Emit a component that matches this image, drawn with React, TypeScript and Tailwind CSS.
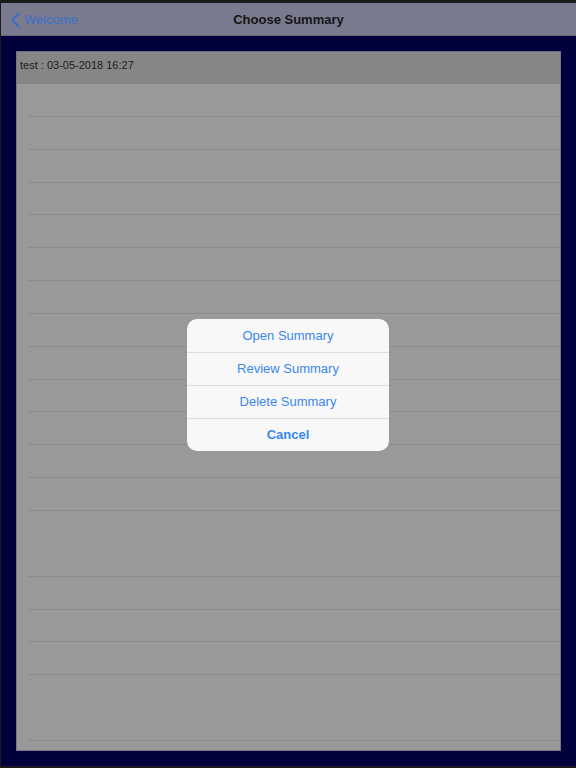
import React from "react"

const rowCount = 20
// rows whose bottom separator is not drawn in the reference
const noLine = new Set([13, 18])

function Alert() {
  const actions = ["Open Summary", "Review Summary", "Delete Summary"]
  return (
    <div className="absolute left-[187px] top-[319px] w-[202px] rounded-[10px] bg-[#f8f8f8] overflow-hidden">
      {actions.map((a, i) => (
        <div
          key={a}
          className={
            "h-[33px] flex items-center justify-center text-[13px] text-[#3a87f2] " +
            (i > 0 ? "border-t border-[#dedede]" : "")
          }
        >
          {a}
        </div>
      ))}
      <div className="h-[33px] flex items-center justify-center text-[13px] font-bold text-[#3a87f2] border-t border-[#dedede]">
        Cancel
      </div>
    </div>
  )
}

export default function App() {
  return (
    <div
      className="relative w-[576px] h-[768px] bg-[#1b1b1b] pt-[3px] pl-[1px] pb-[2px] flex flex-col overflow-hidden"
      style={{ fontFamily: '"Liberation Sans", Arial, sans-serif' }}
    >
      <div className="relative h-[33px] shrink-0 bg-[#7a7a8e] border-b border-[#67677a] flex items-center pt-[2px]">
        <div className="flex items-center pl-[9px] text-[13px] text-[#3a6fc8]">
          <svg width="11" height="16" viewBox="0 0 11 16" fill="none" className="mr-[3px]">
            <path d="M8.5 1.5 L2.5 8 L8.5 14.5" stroke="#3a6fc8" strokeWidth="2" strokeLinecap="round" strokeLinejoin="round" />
          </svg>
          <span>Welcome</span>
        </div>
        <div className="absolute inset-0 pt-[2px] flex items-center justify-center text-[13px] font-bold text-[#151515]">
          Choose Summary
        </div>
      </div>
      <div className="flex-1 bg-[#02003c] p-[15px] flex">
        <div className="flex-1 bg-[#999999] border border-[#75758a] border-t-[#6a6a80] flex flex-col overflow-hidden">
          <div className="h-[32px] shrink-0 bg-[#868686] pl-[3px] pt-[5px] text-[11px] text-[#1c1c1c]">
            test : 03-05-2018 16:27
          </div>
          {Array.from({ length: rowCount }).map((_, i) => (
            <div key={i} className="h-[32.85px] shrink-0 pl-[11px]">
              <div
                className={
                  "h-full " + (noLine.has(i) ? "" : "border-b border-[#8b8b8b]")
                }
              />
            </div>
          ))}
        </div>
      </div>
      <Alert />
    </div>
  )
}
